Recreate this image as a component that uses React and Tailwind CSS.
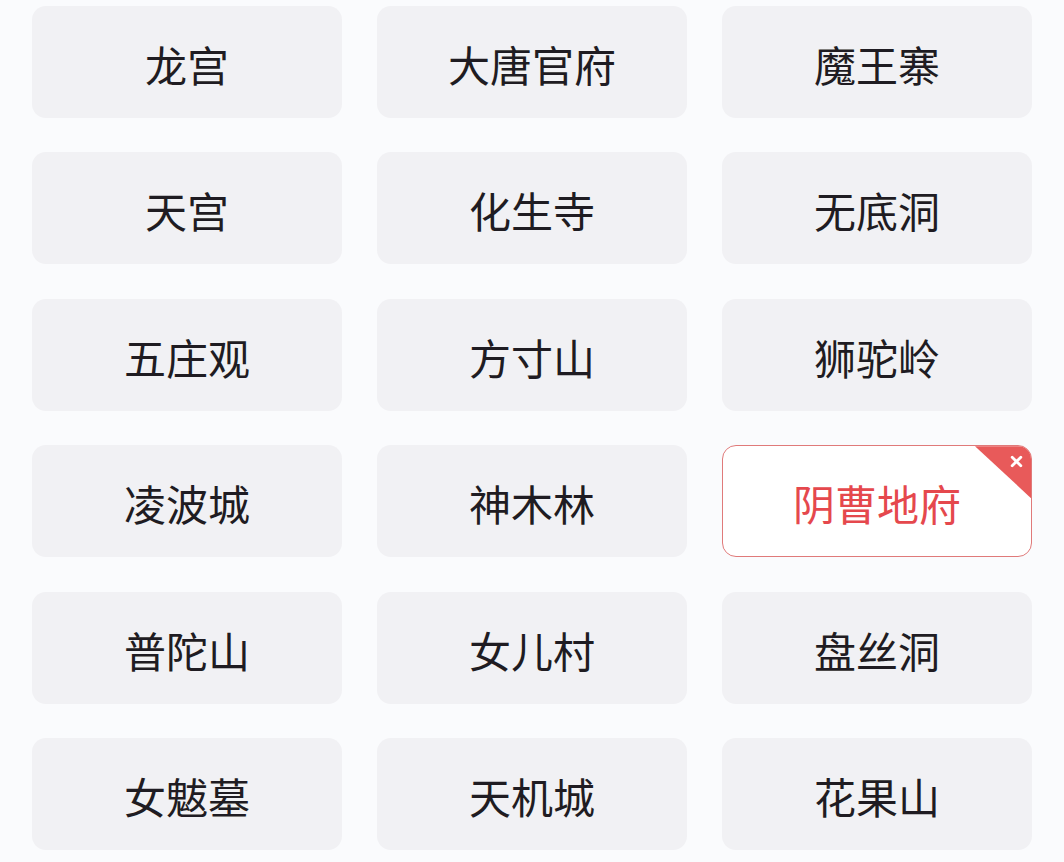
import React from "react";

const items = [
  "龙宫", "大唐官府", "魔王寨",
  "天宫", "化生寺", "无底洞",
  "五庄观", "方寸山", "狮驼岭",
  "凌波城", "神木林", "阴曹地府",
  "普陀山", "女儿村", "盘丝洞",
  "女魃墓", "天机城", "花果山",
];

export default function App() {
  return (
    <div
      className="w-[1064px] h-[862px] bg-[#fafbfd] overflow-hidden pt-[6px] px-[32px]"
      style={{ fontFamily: '"Noto Sans CJK SC", "Noto Sans", sans-serif' }}
    >
      <div className="grid grid-cols-[310px_310px_310px] gap-x-[35px] gap-y-[34.4px]">
        {items.map((name) => {
          const selected = name === "阴曹地府";
          return selected ? (
            <div
              key={name}
              className="relative h-[112px] rounded-[14px] bg-white border border-[#e07a7a] overflow-hidden flex items-center justify-center"
            >
              <span className="text-[42px] leading-none text-[#e5484d] pt-[4px]">{name}</span>
              <div
                className="absolute top-0 right-0 w-[56px] h-[52px] bg-[#e85a5a]"
                style={{ clipPath: "polygon(0 0, 100% 0, 100% 100%)" }}
              />
              <svg
                className="absolute top-[9px] right-[8px]"
                width="13"
                height="13"
                viewBox="0 0 12 12"
              >
                <path d="M2 2 L10 10 M10 2 L2 10" stroke="white" strokeWidth="2.6" strokeLinecap="round" />
              </svg>
            </div>
          ) : (
            <div
              key={name}
              className="h-[112px] rounded-[14px] bg-[#f1f1f4] flex items-center justify-center"
            >
              <span className="text-[42px] leading-none text-[#1f1c22] pt-[4px]">{name}</span>
            </div>
          );
        })}
      </div>
    </div>
  );
}
